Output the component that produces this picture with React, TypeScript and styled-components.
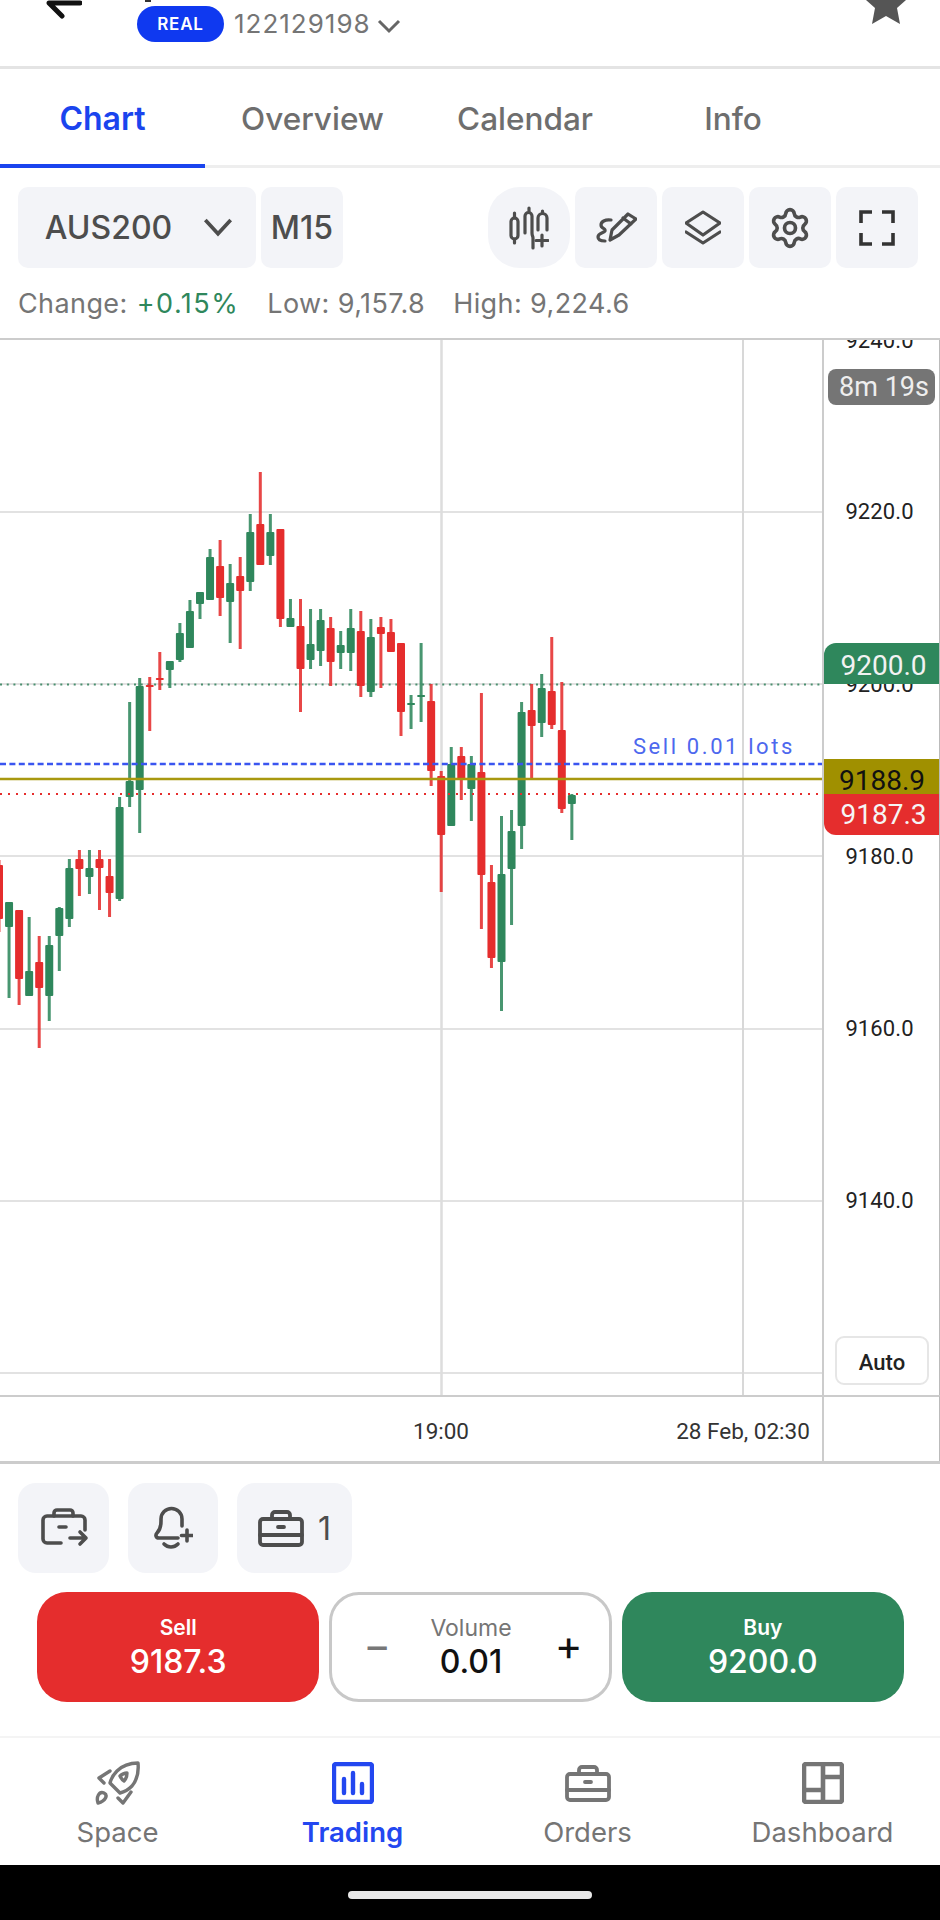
import styled, { createGlobalStyle } from "styled-components";
import { Settings } from "lucide-react";

const GREEN = "#2f875c";
const RED = "#e52d2d";
const BLUE = "#1a44ee";

const GlobalStyle = createGlobalStyle`
  html, body {
    margin: 0;
    padding: 0;
    background: #fff;
  }
  * {
    box-sizing: border-box;
  }
`;

const Screen = styled.div`
  width: 940px;
  height: 1920px;
  display: flex;
  flex-direction: column;
  overflow: hidden;
  background: #fff;
  font-family: Inter, "Liberation Sans", sans-serif;
`;

const Header = styled.header`
  height: 69px;
  flex: none;
  display: flex;
  align-items: flex-start;
  padding: 0 34px 0 46px;
  border-bottom: 3px solid #e4e4e4;
`;

const BackIcon = styled.svg`
  width: 36px;
  height: 20px;
  flex: none;
`;

const Account = styled.div`
  margin-left: 55px;
  flex: 1;
`;

const ClippedTitle = styled.div`
  width: 6px;
  height: 2px;
  margin: 0 0 4px 8px;
  background: #333;
`;

const AccountRow = styled.div`
  display: flex;
  align-items: center;
`;

const Badge = styled.span`
  width: 87px;
  height: 36px;
  display: flex;
  align-items: center;
  justify-content: center;
  border-radius: 18px;
  background: #0f39f0;
  color: #fff;
  font-size: 17px;
  font-weight: 600;
  letter-spacing: 0.8px;
`;

const AccountNumber = styled.span`
  margin: -2px 0 0 10px;
  font-size: 26px;
  letter-spacing: 1px;
  color: #757575;
`;

const AccountChevron = styled.svg`
  width: 26px;
  height: 16px;
  margin: 3px 0 0 5px;
`;

const StarIcon = styled.svg`
  width: 40px;
  height: 26px;
  flex: none;
`;

const TabBar = styled.nav`
  height: 99px;
  flex: none;
  display: grid;
  grid-template-columns: 205px 215px 210px 206px;
  border-bottom: 3px solid #eeeeee;
`;

const Tab = styled.div<{ $active?: boolean }>`
  height: 99px;
  display: flex;
  align-items: center;
  justify-content: center;
  padding-top: 4px;
  font-size: ${(p) => (p.$active ? 32 : 31.5)}px;
  font-weight: ${(p) => (p.$active ? 600 : 500)};
  color: ${(p) => (p.$active ? BLUE : "#6e6e6e")};
  border-bottom: 4px solid ${(p) => (p.$active ? BLUE : "transparent")};
`;

const Toolbar = styled.div`
  flex: none;
  display: flex;
  gap: 5px;
  padding: 19px 22px 0 18px;
`;

const Spacer = styled.div`
  flex: 1;
`;

const ToolButton = styled.div<{ $width?: number; $round?: boolean }>`
  width: ${(p) => p.$width ?? 82}px;
  height: 81px;
  display: flex;
  align-items: center;
  justify-content: center;
  border-radius: ${(p) => (p.$round ? 32 : 10)}px;
  background: #f3f4f8;
  color: #4d4d4d;
  font-size: 32px;
  font-weight: 500;
`;

const SymbolButton = styled(ToolButton)`
  padding-left: 5px;
`;

const SymbolChevron = styled.svg`
  width: 32px;
  height: 19px;
  margin-left: 30px;
`;

const Icon = styled.svg<{ $w: number; $h: number }>`
  width: ${(p) => p.$w}px;
  height: ${(p) => p.$h}px;
  flex: none;
  fill: none;
  stroke: currentColor;
  stroke-linecap: round;
  stroke-linejoin: round;
`;

const Stats = styled.div`
  height: 70px;
  flex: none;
  display: flex;
  align-items: center;
  gap: 28px;
  padding: 0 18px;
  font-size: 27px;
  color: #757575;
`;

const Stat = styled.span`
  display: flex;
  gap: 9px;
  letter-spacing: 0.4px;
`;

const Change = styled.span`
  letter-spacing: 1.5px;
  color: ${GREEN};
`;

const ChartArea = styled.section`
  height: 1126px;
  flex: none;
  display: grid;
  grid-template-columns: 822px 118px;
  grid-template-rows: 1055px 1fr;
  border-top: 2px solid #cccccc;
  border-bottom: 3px solid #cccccc;
  font-family: Roboto, "Liberation Sans", sans-serif;
`;

const Plot = styled.div`
  position: relative;
  overflow: hidden;
`;

const PlotSvg = styled.svg`
  display: block;
  width: 822px;
  height: 1056px;
`;

const OrderLabel = styled.span`
  position: absolute;
  right: 27px;
  top: 392px;
  font-size: 22px;
  line-height: 30px;
  letter-spacing: 2.6px;
  color: #4d68ee;
`;

const PriceAxis = styled.div`
  position: relative;
  overflow: hidden;
  border-left: 2px solid #cccccc;
  border-right: 1px solid #bbbbbb;
`;

const PriceLabel = styled.span<{ $y: number }>`
  position: absolute;
  left: 0;
  width: 111px;
  top: ${(p) => p.$y}px;
  transform: translateY(-50%);
  text-align: center;
  font-size: 22px;
  letter-spacing: 0.1px;
  color: #222;
`;

const Countdown = styled.span`
  position: absolute;
  top: 29px;
  left: 4px;
  width: 107px;
  height: 36px;
  display: flex;
  align-items: center;
  justify-content: center;
  padding-left: 5px;
  border-radius: 8px;
  background: #757575;
  color: #eeeeee;
  font-size: 27px;
  white-space: nowrap;
`;

const PriceTag = styled.span<{ $y: number; $h: number; $bg: string; $fg: string; $corner: string; $left?: number; $pad: number }>`
  position: absolute;
  left: ${(p) => p.$left ?? 0}px;
  right: 0;
  top: ${(p) => p.$y}px;
  height: ${(p) => p.$h}px;
  display: flex;
  align-items: center;
  justify-content: center;
  padding: ${(p) => p.$pad}px 0 0 4px;
  background: ${(p) => p.$bg};
  color: ${(p) => p.$fg};
  font-size: 28px;
  border-radius: ${(p) => p.$corner};
`;

const AutoButton = styled.span`
  position: absolute;
  left: 11px;
  top: 996px;
  width: 94px;
  height: 49px;
  display: flex;
  align-items: center;
  justify-content: center;
  padding-top: 3px;
  border: 2px solid #e6e6e6;
  border-radius: 9px;
  background: #fff;
  color: #222;
  font-size: 22px;
  font-weight: 500;
`;

const TimeAxis = styled.div`
  position: relative;
  border-top: 2px solid #cccccc;
`;

const TimeLabel = styled.span<{ $x: number }>`
  position: absolute;
  top: 21px;
  left: ${(p) => p.$x}px;
  transform: translateX(-50%);
  font-size: 22.500px;
  color: #333;
  white-space: nowrap;
`;

const AxisCorner = styled.div`
  border-top: 2px solid #cccccc;
  border-left: 2px solid #cccccc;
  border-right: 1px solid #bbbbbb;
`;

const Panel = styled.div`
  flex: none;
  padding-top: 19px;
`;

const QuickActions = styled.div`
  display: flex;
  gap: 19px;
  padding: 0 18px;
`;

const QuickButton = styled.div<{ $width: number }>`
  width: ${(p) => p.$width}px;
  height: 90px;
  display: flex;
  align-items: center;
  justify-content: center;
  gap: 14px;
  border-radius: 18px;
  background: #f3f4f8;
  color: #4d4d4d;
  font-size: 32px;
`;

const TradeRow = styled.div`
  display: grid;
  grid-template-columns: repeat(3, 1fr);
  gap: 10px;
  margin-top: 19px;
  padding: 0 36px 0 37px;
`;

const TradeButton = styled.button<{ $bg: string }>`
  height: 110px;
  display: flex;
  flex-direction: column;
  align-items: center;
  justify-content: center;
  padding: 0 0 3px;
  border: 0;
  border-radius: 30px;
  background: ${(p) => p.$bg};
  color: #fff;
  font-family: inherit;
`;

const TradeLabel = styled.span`
  font-size: 21px;
  line-height: 32px;
  font-weight: 600;
`;

const TradePrice = styled.span`
  font-size: 32px;
  line-height: 36px;
  font-weight: 500;
`;

const VolumeBox = styled.div`
  height: 110px;
  display: flex;
  align-items: center;
  justify-content: space-between;
  padding: 0 26px 3px 31px;
  border: 3px solid #c8c8c8;
  border-radius: 30px;
`;

const VolumeStep = styled.span<{ $muted?: boolean }>`
  margin-bottom: 3px;
  font-size: 42px;
  font-weight: 400;
  color: ${(p) => (p.$muted ? "#777" : "#111")};
`;

const VolumeValue = styled.div`
  display: flex;
  flex-direction: column;
  align-items: center;
  margin-right: 4px;
`;

const VolumeLabel = styled.span`
  font-size: 23px;
  line-height: 32px;
  color: #757575;
`;

const VolumeAmount = styled.span`
  font-size: 32px;
  line-height: 36px;
  font-weight: 500;
  color: #111;
`;

const BottomNav = styled.nav`
  height: 129px;
  flex: none;
  margin-top: 34px;
  display: grid;
  grid-template-columns: repeat(4, 1fr);
  border-top: 2px solid #f4f4f4;
`;

const NavItem = styled.div<{ $active?: boolean }>`
  display: flex;
  flex-direction: column;
  align-items: center;
  padding-top: 23px;
  gap: 10px;
  color: ${(p) => (p.$active ? "#2347f0" : "#757575")};
  font-size: 27.500px;
  font-weight: ${(p) => (p.$active ? 600 : 400)};
  line-height: 34px;
`;

const NavIcon = styled.div`
  height: 44px;
  display: flex;
  align-items: center;
  justify-content: center;
`;

const HomeBar = styled.div`
  flex: 1;
  display: flex;
  align-items: center;
  justify-content: center;
  padding-top: 5px;
  background: #000;
`;

const HomePill = styled.div`
  width: 244px;
  height: 8px;
  border-radius: 4px;
  background: #e8e8e8;
`;

// up, wick top, wick bottom, body top, body bottom (page px), one row per bar
const CANDLES: [boolean, number, number, number, number][] = [
  [false, 860, 932, 865, 919],
  [true, 902, 998, 902, 927],
  [false, 910, 1005, 910, 979],
  [true, 917, 996, 971, 996],
  [false, 936, 1048, 962, 988],
  [true, 936, 1021, 945, 996],
  [true, 907, 971, 908, 936],
  [true, 859, 927, 868, 919],
  [false, 850, 896, 859, 869],
  [true, 850, 894, 868, 877],
  [false, 850, 910, 859, 868],
  [false, 859, 917, 876, 893],
  [true, 797, 901, 807, 899],
  [true, 702, 807, 781, 797],
  [true, 678, 833, 686, 790],
  [false, 677, 731, 685, 686],
  [false, 652, 690, 678, 679],
  [true, 661, 688, 661, 670],
  [true, 623, 662, 633, 660],
  [true, 600, 648, 611, 648],
  [true, 592, 619, 592, 604],
  [true, 549, 600, 557, 600],
  [false, 540, 616, 566, 598],
  [true, 564, 643, 583, 602],
  [false, 557, 649, 576, 591],
  [true, 514, 591, 532, 582],
  [false, 472, 565, 524, 565],
  [true, 514, 565, 532, 556],
  [false, 529, 627, 529, 619],
  [true, 599, 627, 618, 627],
  [false, 599, 712, 626, 669],
  [true, 609, 669, 644, 660],
  [true, 609, 666, 620, 651],
  [false, 617, 686, 628, 662],
  [true, 631, 669, 645, 653],
  [true, 609, 671, 628, 653],
  [false, 611, 697, 631, 686],
  [true, 619, 697, 637, 692],
  [false, 617, 688, 627, 634],
  [false, 619, 652, 632, 652],
  [false, 643, 736, 643, 712],
  [true, 695, 729, 703, 704],
  [true, 643, 722, 695, 696],
  [false, 684, 786, 701, 771],
  [false, 771, 892, 776, 835],
  [true, 747, 826, 764, 826],
  [false, 747, 800, 756, 779],
  [true, 756, 821, 764, 789],
  [false, 693, 929, 772, 875],
  [false, 865, 968, 882, 958],
  [true, 816, 1011, 874, 962],
  [true, 810, 925, 831, 869],
  [true, 702, 849, 712, 826],
  [false, 684, 779, 710, 726],
  [true, 674, 737, 688, 723],
  [false, 637, 729, 691, 725],
  [false, 682, 813, 730, 809],
  [true, 794, 840, 795, 804],
];

const GRID_Y = [512, 684, 856, 1029, 1201, 1373];
const AXIS_TICKS: [string, number][] = [
  ["9240.0", 0],
  ["9220.0", 171],
  ["9200.0", 344],
  ["9180.0", 516],
  ["9160.0", 688],
  ["9140.0", 860],
];

function CandleChart() {
  return (
    <PlotSvg viewBox="0 340 822 1056">
      {GRID_Y.map((y) => (
        <line key={y} x1={0} x2={822} y1={y} y2={y} stroke="#e2e2e2" strokeWidth={2} />
      ))}
      <line x1={441.5} x2={441.5} y1={340} y2={1396} stroke="#dddddd" strokeWidth={2.5} />
      <line x1={743} x2={743} y1={340} y2={1396} stroke="#d8d8d8" strokeWidth={2} />
      <line x1={0} x2={822} y1={684.6} y2={684.6} stroke="#4a8f6f" strokeWidth={2} strokeDasharray="2 4.7" />
      {CANDLES.map(([up, hi, lo, top, bot], i) => {
        const x = -1 + i * 10.05;
        const color = up ? GREEN : RED;
        return (
          <g key={i} fill={color}>
            <rect x={x - 1.5} y={hi} width={3} height={lo - hi} opacity={0.88} />
            <rect x={x - 4} y={top} width={8} height={Math.max(bot - top, 2)} rx={1} />
          </g>
        );
      })}
      <line x1={0} x2={822} y1={764} y2={764} stroke="#3a55f0" strokeWidth={2.4} strokeDasharray="6 3.4" />
      <line x1={0} x2={822} y1={779} y2={779} stroke="#a8980f" strokeWidth={2.5} />
      <line x1={0} x2={822} y1={794} y2={794} stroke={RED} strokeWidth={2} strokeDasharray="2 6" />
    </PlotSvg>
  );
}

function IndicatorIcon() {
  return (
    <Icon $w={40} $h={44} viewBox="0 0 40 44" strokeWidth={3.2}>
      <rect x={2} y={12} width={7} height={21} rx={3.5} />
      <path d="M5.5 7v5M5.5 33v4" />
      <path d="M20 2v4M16 27V10a3.5 3.5 0 0 1 7 0v17c0 3 1 3 1 5v10M20 6v0" />
      <path d="M29 24V12a4.5 4.5 0 0 1 9 0v12M33.5 5v2" />
      <path d="M33 29v11M27 34.500h12" />
    </Icon>
  );
}

function DrawIcon() {
  return (
    <Icon $w={42} $h={32} viewBox="0 0 42 32" strokeWidth={3.2}>
      <path d="M16 8C10 7 6 10 6 13c0 4 5 3 4 6-1 2-7 2-7 6 0 3 3 4 7 4" />
      <path d="M15 28l2-10L33 2l8 5-17 16zM28 6l8 6" />
    </Icon>
  );
}

function LayersIcon() {
  return (
    <Icon $w={36} $h={35} viewBox="0 0 36 35" strokeWidth={3.2}>
      <path d="M18 2l17 11-17 12L1 13z" />
      <path d="M1 22l17 11 17-11" />
    </Icon>
  );
}

function FullscreenIcon() {
  return (
    <Icon $w={36} $h={36} viewBox="0 0 36 36" strokeWidth={3.6} color="#333">
      <path strokeLinecap="butt" strokeLinejoin="miter" d="M2 13V2h11M23 2h11v11M34 23v11H23M13 34H2V23" />
    </Icon>
  );
}

function CaseOutIcon() {
  return (
    <Icon $w={50} $h={44} viewBox="0 0 50 44" strokeWidth={3.6}>
      <path d="M22 37H8a4 4 0 0 1-4-4V14a4 4 0 0 1 4-4h34a4 4 0 0 1 4 4v10" />
      <path d="M15 10V7a3 3 0 0 1 3-3h13a3 3 0 0 1 3 3v3M20 21h7" />
      <path d="M31 32h16M41 26l6 6-6 6" />
    </Icon>
  );
}

function BellPlusIcon() {
  return (
    <Icon $w={40} $h={44} viewBox="0 0 40 44" strokeWidth={3.6}>
      <path d="M25 32H6c-3 0-4-3-2-5 3-3 4-6 4-12v-2a10.500 10.500 0 0 1 21 0v7" />
      <path d="M11 38c4 4 10 4 14 0" />
      <path d="M34 24v11M28.500 29.500h11" />
    </Icon>
  );
}

function CaseIcon() {
  return (
    <Icon $w={46} $h={37} viewBox="0 0 46 37" strokeWidth={3.8}>
      <rect x={2} y={9} width={42} height={26} rx={3} />
      <path d="M14 9V5a3 3 0 0 1 3-3h12a3 3 0 0 1 3 3v4M2 25h42M20 17h6" />
    </Icon>
  );
}

function RocketIcon() {
  return (
    <Icon $w={45} $h={44} viewBox="0 0 45 44" strokeWidth={3.4}>
      <path d="M43 2c-8 0-15 2-21 8-4 4-6 8-7 12l10 10c4-1 8-3 12-7 5-6 7-13 6-23z" />
      <path d="M25 15c2-2 5-3 7-3 0 3-1 6-3 8-2-1-3-3-4-5z" />
      <path d="M15 10L4 17l5 5M23 37l5 5 8-11" />
      <path d="M3 42c-2-6 1-12 6-10 4 2 2 8-6 10z" />
    </Icon>
  );
}

function TradingIcon() {
  return (
    <Icon $w={42} $h={42} viewBox="0 0 42 42" strokeWidth={4.4}>
      <rect x={2} y={2} width={38} height={38} rx={2} />
      <path d="M12 17v14M21 11v20M30 22v9" />
    </Icon>
  );
}

function DashboardIcon() {
  return (
    <Icon $w={42} $h={42} viewBox="0 0 42 42" strokeWidth={4.6}>
      <rect x={2} y={2} width={38} height={38} rx={2} />
      <path d="M21 2v38M2 28h19M21 15h19" />
    </Icon>
  );
}

export default function App() {
  return (
    <Screen>
      <GlobalStyle />
      <Header>
        <BackIcon viewBox="0 0 36 20">
          <path d="M34 3H3L16 16" fill="none" stroke="#111" strokeWidth={5} strokeLinecap="round" strokeLinejoin="round" />
        </BackIcon>
        <Account>
          <ClippedTitle />
          <AccountRow>
            <Badge>REAL</Badge>
            <AccountNumber>122129198</AccountNumber>
            <AccountChevron viewBox="0 0 26 16">
              <path d="M3 3l10 10L23 3" fill="none" stroke="#666" strokeWidth={3} />
            </AccountChevron>
          </AccountRow>
        </Account>
        <StarIcon viewBox="0 0 40 26">
          <path d="M0 0l9 8-3 16 14-8 14 8-3-16 9-8z" fill="#555" />
        </StarIcon>
      </Header>

      <TabBar>
        <Tab $active>Chart</Tab>
        <Tab>Overview</Tab>
        <Tab>Calendar</Tab>
        <Tab>Info</Tab>
      </TabBar>

      <Toolbar>
        <SymbolButton $width={238}>
          AUS200
          <SymbolChevron viewBox="0 0 30 18">
            <path d="M3 2l12 13L27 2" fill="none" stroke="#4d4d4d" strokeWidth={3.5} />
          </SymbolChevron>
        </SymbolButton>
        <ToolButton>M15</ToolButton>
        <Spacer />
        <ToolButton $round>
          <IndicatorIcon />
        </ToolButton>
        <ToolButton>
          <DrawIcon />
        </ToolButton>
        <ToolButton>
          <LayersIcon />
        </ToolButton>
        <ToolButton>
          <Settings size={44} strokeWidth={2} />
        </ToolButton>
        <ToolButton>
          <FullscreenIcon />
        </ToolButton>
      </Toolbar>

      <Stats>
        <Stat>
          Change: <Change>+0.15%</Change>
        </Stat>
        <Stat>Low: 9,157.8</Stat>
        <Stat>High: 9,224.6</Stat>
      </Stats>

      <ChartArea>
        <Plot>
          <CandleChart />
          <OrderLabel>Sell 0.01 lots</OrderLabel>
        </Plot>
        <PriceAxis>
          {AXIS_TICKS.map(([label, y]) => (
            <PriceLabel key={label} $y={y}>
              {label}
            </PriceLabel>
          ))}
          <Countdown>8m 19s</Countdown>
          <PriceTag $y={303} $h={41} $bg={GREEN} $fg="#f2f2f2" $corner="12px 0 0 0" $pad={3}>
            9200.0
          </PriceTag>
          <PriceTag $y={419} $h={36} $left={-3} $bg="#a09000" $fg="#111" $corner="0" $pad={6}>
            9188.9
          </PriceTag>
          <PriceTag $y={454} $h={41} $bg={RED} $fg="#f5f5f5" $corner="0 0 0 12px" $pad={0}>
            9187.3
          </PriceTag>
          <AutoButton>Auto</AutoButton>
        </PriceAxis>
        <TimeAxis>
          <TimeLabel $x={441}>19:00</TimeLabel>
          <TimeLabel $x={743}>28 Feb, 02:30</TimeLabel>
        </TimeAxis>
        <AxisCorner />
      </ChartArea>

      <Panel>
        <QuickActions>
          <QuickButton $width={91}>
            <CaseOutIcon />
          </QuickButton>
          <QuickButton $width={90}>
            <BellPlusIcon />
          </QuickButton>
          <QuickButton $width={115}>
            <CaseIcon />1
          </QuickButton>
        </QuickActions>
        <TradeRow>
          <TradeButton $bg={RED}>
            <TradeLabel>Sell</TradeLabel>
            <TradePrice>9187.3</TradePrice>
          </TradeButton>
          <VolumeBox>
            <VolumeStep $muted>−</VolumeStep>
            <VolumeValue>
              <VolumeLabel>Volume</VolumeLabel>
              <VolumeAmount>0.01</VolumeAmount>
            </VolumeValue>
            <VolumeStep>+</VolumeStep>
          </VolumeBox>
          <TradeButton $bg={GREEN}>
            <TradeLabel>Buy</TradeLabel>
            <TradePrice>9200.0</TradePrice>
          </TradeButton>
        </TradeRow>
      </Panel>

      <BottomNav>
        <NavItem>
          <NavIcon>
            <RocketIcon />
          </NavIcon>
          Space
        </NavItem>
        <NavItem $active>
          <NavIcon>
            <TradingIcon />
          </NavIcon>
          Trading
        </NavItem>
        <NavItem>
          <NavIcon>
            <CaseIcon />
          </NavIcon>
          Orders
        </NavItem>
        <NavItem>
          <NavIcon>
            <DashboardIcon />
          </NavIcon>
          Dashboard
        </NavItem>
      </BottomNav>

      <HomeBar>
        <HomePill />
      </HomeBar>
    </Screen>
  );
}
